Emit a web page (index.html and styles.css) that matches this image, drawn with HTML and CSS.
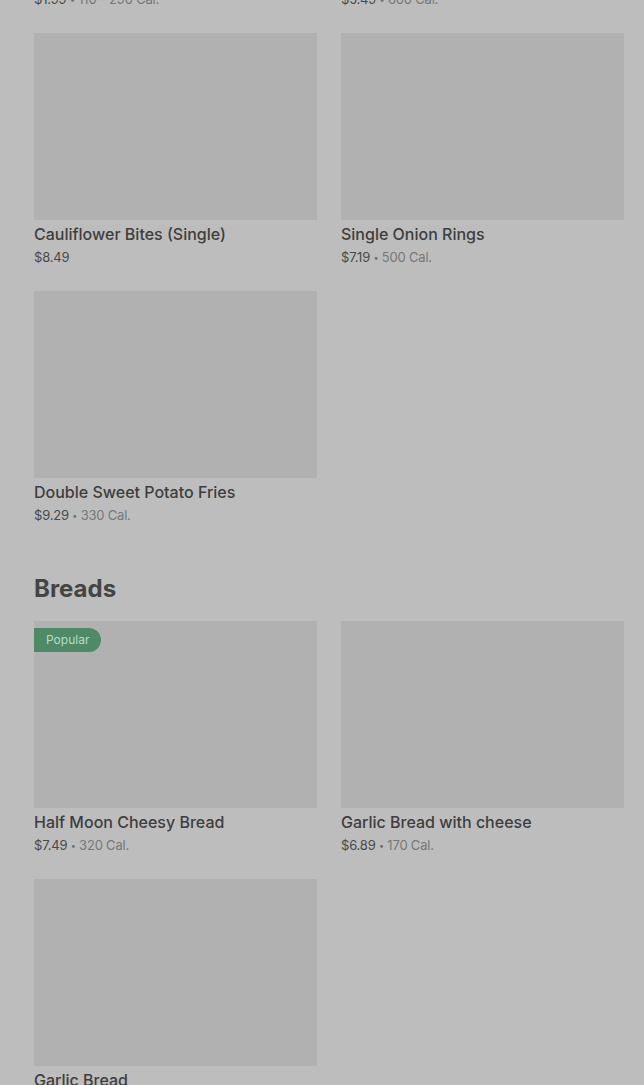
FILE: index.html
```html
<!DOCTYPE html>
<html lang="en">
<head>
  <meta charset="UTF-8" />
  <title>Menu</title>
  <link rel="stylesheet" href="styles.css">
</head>
<body>
  <div class="menu">
    <section class="section">
      <div class="grid first">
        <div class="item">
          <div class="photo"></div>
          <div class="name">Regular Fries</div>
          <div class="meta"><span class="price">$1.99</span> <span class="dot">•</span> <span class="cal">110 - 290 Cal.</span></div>
        </div>
        <div class="item">
          <div class="photo"></div>
          <div class="name">Loaded Fries</div>
          <div class="meta"><span class="price">$5.49</span> <span class="dot">•</span> <span class="cal">600 Cal.</span></div>
        </div>
        <div class="item">
          <div class="photo"></div>
          <div class="name">Cauliflower Bites (Single)</div>
          <div class="meta"><span class="price">$8.49</span></div>
        </div>
        <div class="item">
          <div class="photo"></div>
          <div class="name">Single Onion Rings</div>
          <div class="meta"><span class="price">$7.19</span> <span class="dot">•</span> <span class="cal">500 Cal.</span></div>
        </div>
        <div class="item">
          <div class="photo"></div>
          <div class="name">Double Sweet Potato Fries</div>
          <div class="meta"><span class="price">$9.29</span> <span class="dot">•</span> <span class="cal">330 Cal.</span></div>
        </div>
      </div>
    </section>

    <section class="section">
      <h2 class="heading">Breads</h2>
      <div class="grid">
        <div class="item">
          <div class="photo">
            <span class="badge">Popular</span>
          </div>
          <div class="name">Half Moon Cheesy Bread</div>
          <div class="meta"><span class="price">$7.49</span> <span class="dot">•</span> <span class="cal">320 Cal.</span></div>
        </div>
        <div class="item">
          <div class="photo"></div>
          <div class="name">Garlic Bread with cheese</div>
          <div class="meta"><span class="price">$6.89</span> <span class="dot">•</span> <span class="cal">170 Cal.</span></div>
        </div>
        <div class="item">
          <div class="photo"></div>
          <div class="name">Garlic Bread</div>
          <div class="meta"><span class="price">$5.29</span> <span class="dot">•</span> <span class="cal">150 Cal.</span></div>
        </div>
      </div>
    </section>
  </div>
</body>
</html>
```

FILE: styles.css
```css
body {
  margin: 0;
  background-color: #bdbdbd;
  font-family: Inter, "Noto Sans", sans-serif;
  color: #3f3f3f;
  overflow: hidden;
}

.menu {
  padding: 0 20px 0 34px;
  margin-top: -225px;
}

.grid {
  display: grid;
  grid-template-columns: 1fr 1fr;
  column-gap: 24px;
  row-gap: 24px;
}

.item {
  display: flex;
  flex-direction: column;
}

.photo {
  position: relative;
  height: 187px;
  background-color: #b1b1b1;
}

.badge {
  position: absolute;
  top: 7px;
  left: 0;
  height: 24px;
  line-height: 24px;
  padding: 0 12px;
  font-size: 12px;
  color: #b9dcc5;
  background-color: #4e8a66;
  border-radius: 0 12px 12px 0;
}

.name {
  margin-top: 4px;
  height: 20px;
  font-size: 16px;
  font-weight: 500;
  line-height: 20px;
  color: #3e3e3e;
}

.meta {
  margin-top: 3px;
  height: 20px;
  font-size: 13px;
  line-height: 20px;
  letter-spacing: -0.2px;
}

.price {
  color: #4a4a4a;
}

.dot {
  color: #6f6f6f;
  font-size: 9px;
  line-height: 1;
  vertical-align: 1px;
}

.cal {
  color: #777;
}

.heading {
  margin: 50px 0 18px;
  font-size: 24px;
  line-height: 28px;
  font-weight: 700;
  color: #444;
}
```
